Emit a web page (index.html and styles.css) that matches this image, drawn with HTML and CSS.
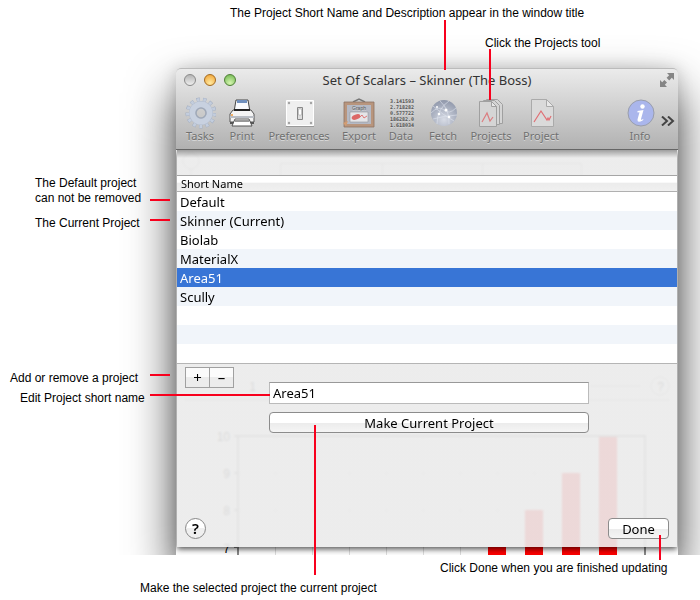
FILE: index.html
```html
<!DOCTYPE html>
<html lang="en">
<head>
    <meta charset="UTF-8">
    <meta name="viewport" content="width=device-width, initial-scale=1.0">
    <link rel="stylesheet" href="styles.css">
    <title>Projects</title>
</head>
<body>

<main class="figure">
    <div class="shot">
        <div class="window">
            <header class="titlebar">
                <div class="title-row">
                    <button class="light light-grey" aria-label="Close"></button>
                    <button class="light light-orange" aria-label="Minimize"></button>
                    <button class="light light-green" aria-label="Zoom"></button>
                    <h1 class="title">Set Of Scalars – Skinner (The Boss)</h1>
                    <button class="fullscreen" aria-label="Full screen">
                        <svg width="14" height="14" viewBox="0 0 14 14" fill="#858585">
                            <path d="M7 0h7v7l-2.200-2.200-2.600 2.600-2.600-2.600 2.600-2.600z"/>
                            <path d="M0 7l2.200 2.200 2.200-2.200 2.600 2.600-2.200 2.200L7 14H0z"/>
                        </svg>
                    </button>
                </div>
                <nav class="toolbar">
                    <button class="tool tool-tasks">
                        <svg width="32" height="32" viewBox="0 0 32 32" fill="none">
                            <circle cx="17" cy="16" r="13" stroke="#a4afc2" stroke-width="5" stroke-dasharray="3.300 2.980"/>
                            <circle cx="17" cy="16" r="13" stroke="#c3cddd" stroke-width="4" stroke-dasharray="2.600 3.680" stroke-dashoffset="-0.350"/>
                            <circle cx="17" cy="16" r="8.500" stroke="#b2bccd" stroke-width="7"/>
                            <circle cx="17" cy="16" r="8.500" stroke="#c8d1e0" stroke-width="6"/>
                            <circle cx="17" cy="16" r="5" stroke="#a0a9b8" stroke-width="1.500"/>
                        </svg>
                        <span>Tasks</span>
                    </button>
                    <button class="tool tool-print">
                        <svg width="32" height="32" viewBox="0 0 32 32">
                            <path d="M10 3h12l2 12H8z" fill="#f8fafd" stroke="#444" stroke-width="1"/>
                            <path d="M11 3h10v3H11z" fill="#6f8fbd"/>
                            <path d="M7 13h18l3 4v8H4v-8z" fill="#f4f4f4" stroke="#555"/>
                            <path d="M8 13h16" stroke="#222" stroke-width="2"/>
                            <path d="M4 19h24v2H4z" fill="#b9bdc4"/>
                            <path d="M4 25h24v2H4z" fill="#555"/>
                            <path d="M9 22h14l3 7H6z" fill="#fff" stroke="#555"/>
                            <path d="M9 24h14" stroke="#333"/>
                            <circle cx="6" cy="18" r="1" fill="#f29a38"/>
                        </svg>
                        <span>Print</span>
                    </button>
                    <button class="tool tool-prefs">
                        <svg width="32" height="32" viewBox="0 0 32 32">
                            <path d="M3.500 3.500h27v25h-27z" fill="#efefef" stroke="#fff"/>
                            <path d="M3 29.500h28" stroke="#9a9a9a"/>
                            <g fill="#a3a3a3">
                                <circle cx="6" cy="6" r="1.200"/><circle cx="28" cy="6" r="1.200"/>
                                <circle cx="6" cy="26" r="1.200"/><circle cx="28" cy="26" r="1.200"/>
                            </g>
                            <path d="M14.500 10.500h5v12h-5z" fill="#ddd" stroke="#888"/>
                            <path d="M15.500 12h3v6h-3z" fill="#fff" stroke="#999" stroke-width=".5"/>
                        </svg>
                        <span>Preferences</span>
                    </button>
                    <button class="tool tool-export">
                        <svg width="32" height="32" viewBox="0 0 32 32" fill="none">
                            <path d="M10 5l6-3 6 3" stroke="#777" stroke-width="1.500"/>
                            <path d="M2.500 6.500h27v22h-27z" fill="#b5b9c4" stroke="#b8957d" stroke-width="3"/>
                            <path d="M1 5h30v25H1z" stroke="#8d7366" stroke-width=".8"/>
                            <text class="graph-text" x="16" y="13">Graph</text>
                            <path d="M7 15h18v10H7z" fill="#e5e5e8" stroke="#92949c" stroke-width=".6"/>
                            <ellipse cx="13" cy="20" rx="4.500" ry="2.500" transform="rotate(-20 13 20)" fill="#dc6868"/>
                            <path d="M16 21l3-3 2 3 3-2" stroke="#de7777"/>
                            <path d="M0 26l5-2-2 5z" fill="#d39d72"/>
                        </svg>
                        <span>Export</span>
                    </button>
                    <button class="tool tool-data">
                        <svg width="32" height="32" viewBox="0 0 32 32" class="digits">
                            <text x="17" y="6">3.141593</text>
                            <text x="17" y="12">2.718282</text>
                            <text x="17" y="18">0.577722</text>
                            <text x="17" y="24">186282.0</text>
                            <text x="17" y="30">1.618034</text>
                        </svg>
                        <span>Data</span>
                    </button>
                    <button class="tool tool-fetch">
                        <svg width="32" height="32" viewBox="0 0 32 32" fill="none">
                            <defs>
                                <radialGradient id="globe" cx=".5" cy=".75" r=".75">
                                    <stop offset="0" stop-color="#d8dce6"/>
                                    <stop offset="1" stop-color="#8f97aa"/>
                                </radialGradient>
                            </defs>
                            <circle cx="17" cy="16" r="13" fill="url(#globe)"/>
                            <g stroke="#dfe4ee" stroke-width=".6">
                                <path d="M4 16q8-8 13-3t12-2M6 22q10-3 24-4M13 4q10 9 9 23M22 4q-12 8-12 23M6 9q10 9 21 15"/>
                            </g>
                            <g fill="#fff">
                                <circle cx="19" cy="13" r="1.500"/><circle cx="12" cy="17" r="1.300"/>
                                <circle cx="22" cy="20" r="1.300"/><circle cx="10" cy="10" r="1"/>
                            </g>
                        </svg>
                        <span>Fetch</span>
                    </button>
                    <button class="tool tool-projects">
                        <svg width="32" height="32" viewBox="0 0 32 32" fill="#d5d5d5" stroke="#a0a0a0">
                            <path d="M11.500 2.500h11l5 5v19h-16z"/>
                            <path d="M8.500 3.500h11l5 5v19h-16z"/>
                            <path d="M4.500 4.500h12l5 5v20h-17z"/>
                            <path d="M16.500 4.500v5h5z" fill="#e8e8e8"/>
                            <path d="M7 25l5-9 3 8 3-4" fill="none" stroke="#dc7d80" stroke-width="1.200"/>
                        </svg>
                        <span>Projects</span>
                    </button>
                    <button class="tool tool-project">
                        <svg width="32" height="32" viewBox="0 0 32 32" fill="#dadada" stroke="#aaa">
                            <path d="M6.500 2.500h15l7 7v20h-22z"/>
                            <path d="M21.500 2.500v7h7z" fill="#e8e8e8"/>
                            <path d="M9 25l7-11 6 9 1-2 1 2 2-4" fill="none" stroke="#e06f74" stroke-width="1.200"/>
                        </svg>
                        <span>Project</span>
                    </button>
                    <button class="tool tool-info">
                        <svg width="32" height="32" viewBox="0 0 32 32">
                            <circle cx="17" cy="16" r="13" fill="#aab6ec" stroke="#9a9eac"/>
                            <circle cx="18.500" cy="9.500" r="2.200" fill="#fff"/>
                            <path d="M13.500 14l6-1-2.500 9q-.3 1.800 2.500-.2l-.5 1.500q-6 3.500-5.500-.8l2-7.300-2 .2z" fill="#fff"/>
                        </svg>
                        <span>Info</span>
                    </button>
                    <button class="more" aria-label="More tools">
                        <svg width="14" height="10" viewBox="0 0 14 10" fill="none" stroke="#444" stroke-width="2">
                            <path d="M1 0.500l5 4.500-5 4.500M7 0.500l5 4.500-5 4.500"/>
                        </svg>
                    </button>
                </nav>
            </header>

            <div class="document">
                <!-- document behind the sheet -->
                <svg class="backdrop" width="502" height="405" viewBox="0 0 502 405" fill="none" stroke="#999">
                    <circle cx="15" cy="11" r="8"/>
                    <path d="M15 19v8M104.500 40V13.500h301V40M206.500 14v26M306.500 14v26"/>
                    <circle cx="484" cy="236" r="9"/>
                    <path d="M414 236h51M8 250h486"/>
                    <g stroke="#ddd">
                        <path d="M99.500 287v120M136.500 287v120M173.500 287v120M210.500 287v120M247.500 287v120M284.500 287v120M321.500 287v120M358.500 287v120M395.500 287v120M432.500 287v120"/>
                        <path d="M62 323.500h407M62 360.500h407"/>
                    </g>
                    <g fill="#f00" stroke="none">
                        <path d="M423 286h18v120h-18zM386 323h18v83h-18zM349 360h18v46h-18zM312 397h18v9h-18z"/>
                    </g>
                    <path d="M62 406V286h407v120M58 286h4M58 323h4M58 360h4M58 397h4" stroke="#888" stroke-width="2"/>
                    <g class="axis-text">
                        <text x="54" y="291">10</text>
                        <text x="54" y="328">9</text>
                        <text x="54" y="365">8</text>
                        <text x="54" y="403">7</text>
                        <text x="172" y="38">Labels</text>
                        <text x="260" y="38">1</text>
                        <text x="360" y="38">2</text>
                        <text x="80" y="241">1</text>
                        <text x="488" y="241">?</text>
                    </g>
                </svg>

                <form class="sheet">
                    <table class="projects">
                        <thead>
                            <tr><th scope="col">Short Name</th></tr>
                        </thead>
                        <tbody>
                            <tr><td>Default</td></tr>
                            <tr><td>Skinner (Current)</td></tr>
                            <tr><td>Biolab</td></tr>
                            <tr><td>MaterialX</td></tr>
                            <tr class="selected"><td>Area51</td></tr>
                            <tr><td>Scully</td></tr>
                            <tr><td></td></tr>
                            <tr><td></td></tr>
                            <tr><td></td></tr>
                        </tbody>
                    </table>
                    <div class="editor">
                        <div class="add-remove">
                            <button type="button" aria-label="Add project">+</button>
                            <button type="button" aria-label="Remove project">–</button>
                        </div>
                        <div class="fields">
                            <input type="text" class="short-name" value="Area51" aria-label="Short name">
                            <button type="button" class="push">Make Current Project</button>
                        </div>
                    </div>
                    <div class="actions">
                        <button type="button" class="help" aria-label="Help">?</button>
                        <button type="button" class="push done">Done</button>
                    </div>
                </form>
            </div>
        </div>
    </div>

    <!-- callouts -->
    <p class="note note-title">The Project Short Name and Description appear in the window title</p>
    <p class="note note-tool">Click the Projects tool</p>
    <p class="note note-default">The Default project<br>can not be removed</p>
    <p class="note note-current">The Current Project</p>
    <p class="note note-add">Add or remove a project</p>
    <p class="note note-edit">Edit Project short name</p>
    <p class="note note-make">Make the selected project the current project</p>
    <p class="note note-done">Click Done when you are finished updating</p>
    <svg class="pointers" width="700" height="600" viewBox="0 0 700 600" stroke="#f8001d" stroke-width="2">
        <path d="M445 20v50M490 49v51M150 200h20M150 220h20M150 375h20M150 395h120M315 425v150M660 535v25"/>
    </svg>
</main>

</body>
</html>
```

FILE: styles.css
```css
body {
    margin: 0;
    background-color: #fff;
    font-family: "Noto Sans", "Open Sans", sans-serif;
    font-size: 13px;
    color: #000;
}

button {
    margin: 0;
    padding: 0;
    border: none;
    background: none;
    font-family: inherit;
    color: inherit;
}

.figure {
    position: relative;
    padding-bottom: 45px;
}

.shot {
    padding: 68px 22px 0 176px;
    overflow: hidden;
}

.window {
    border-radius: 5px 5px 0 0;
    box-shadow: 0 24px 48px rgba(0, 0, 0, 0.75), 0 0 16px rgba(0, 0, 0, 0.15);
}

/* title bar and toolbar */
.titlebar {
    height: 82px;
    border-top: 1px solid #bbb;
    border-bottom: 1px solid #666;
    border-radius: 5px 5px 0 0;
    box-sizing: border-box;
    background: linear-gradient(#ebebeb, #b1b1b1);
}

.title-row {
    display: flex;
    align-items: center;
    gap: 8px;
    height: 22px;
    padding: 0 4px 0 8px;
}

.light {
    width: 12px;
    height: 12px;
    border: 1px solid #8a8a8a;
    border-radius: 50%;
}

.light-grey {
    background: linear-gradient(#b5b5b5, #eee);
}

.light-orange {
    border-color: #a36a20;
    background: radial-gradient(circle at 50% 80%, #ffe9a0, #f0a030);
}

.light-green {
    border-color: #4f7f36;
    background: radial-gradient(circle at 50% 80%, #d5f5b0, #6cb54c);
}

.title {
    flex: 1;
    margin: 0;
    font-size: 13px;
    font-weight: normal;
    text-align: center;
    color: #333;
    padding-right: 42px;
}

.fullscreen {
    width: 14px;
    height: 14px;
}

.fullscreen svg,
.more svg {
    display: block;
}

.toolbar {
    display: flex;
    align-items: center;
    padding: 6px 2px 0;
}

.tool {
    display: flex;
    flex-direction: column;
    align-items: center;
    font-size: 12px;
    line-height: 16px;
    color: #707070;
    text-shadow: 0 1px 0 #d8d8d8;
}

.tool span {
    margin-top: -1px;
    font-size: 11px;
}

.tool-tasks { width: 44px; }
.tool-print { width: 40px; }
.tool-prefs { width: 74px; }
.tool-export { width: 46px; }
.tool-data { width: 38px; }
.tool-fetch { width: 46px; }
.tool-projects { width: 50px; }
.tool-project { width: 50px; }

.tool-info {
    width: 32px;
    margin-left: auto;
}

.more {
    width: 20px;
    padding-left: 5px;
}

.digits {
    font: bold 5px "DejaVu Sans Mono", monospace;
    fill: #555;
    text-anchor: middle;
}

.graph-text {
    font: 5px "Liberation Sans", sans-serif;
    fill: #555;
    text-anchor: middle;
}

/* sheet */
.document {
    position: relative;
    padding: 0 1px 8px;
    background-color: #fff;
    overflow: hidden;
}

.backdrop {
    position: absolute;
    top: 0;
    left: 0;
}

.axis-text {
    font: 12px "Liberation Sans", sans-serif;
    fill: #000;
    stroke: none;
    text-anchor: end;
}

.sheet {
    position: relative;
    padding-top: 25px;
    background: linear-gradient(rgba(150, 150, 150, 0.92), rgba(235, 235, 235, 0.92) 8px);
    backdrop-filter: blur(1px);
    box-shadow: 0 2px 6px rgba(0, 0, 0, 0.7);
}

.projects {
    width: 100%;
    border-collapse: separate;
    border-spacing: 0;
    border-bottom: 1px solid #b5b5b5;
    background-color: #fff;
}

.projects th {
    height: 15px;
    padding: 0 4px;
    border-top: 1px solid #a5a5a5;
    border-bottom: 1px solid #b0b0b0;
    background: linear-gradient(#fff 40%, #ececec 50%, #f0f0f0);
    font-size: 11px;
    font-weight: normal;
    line-height: 15px;
    text-align: left;
}

.projects td {
    height: 17px;
    padding: 2px 3px 0;
    line-height: 17px;
}

.projects tbody tr:nth-child(even) {
    background-color: #f1f5fa;
}

.projects tbody .selected {
    background-color: #3875d6;
    color: #fff;
}

.editor {
    display: grid;
    grid-template-columns: 84px 1fr 80px;
    align-items: start;
    padding: 3px 8px 0;
}

.add-remove {
    display: flex;
}

.add-remove button {
    width: 25px;
    height: 21px;
    border: 1px solid #a0a0a0;
    background: linear-gradient(#fbfbfb 50%, #ececec 50%);
    font-size: 15px;
    line-height: 19px;
}

.add-remove button + button {
    border-left: none;
    width: 24px;
}

.fields {
    display: flex;
    flex-direction: column;
    gap: 8px;
    padding-top: 15px;
}

.short-name {
    height: 22px;
    padding: 0 3px;
    border: 1px solid #bbb;
    border-top-color: #999;
    box-sizing: border-box;
    background-color: #fff;
    font-family: inherit;
    font-size: 13px;
}

.push {
    height: 21px;
    border: 1px solid #8c8c8c;
    border-radius: 4px;
    background: linear-gradient(#fff 50%, #ececec 55%, #f5f5f5);
    font-size: 13px;
    line-height: 18px;
}

.actions {
    display: flex;
    justify-content: space-between;
    padding: 85px 8px 8px;
}

.help {
    width: 21px;
    height: 21px;
    border: 1px solid #888;
    border-radius: 50%;
    background: linear-gradient(#fff 50%, #efefef 50%);
    font-size: 15px;
    font-weight: 600;
    line-height: 19px;
}

.done {
    width: 61px;
}

/* callouts */
.note {
    position: absolute;
    margin: 0;
    font: 12px/15px "Liberation Sans", Arial, sans-serif;
    white-space: nowrap;
}

.note-title {
    top: 6px;
    left: 230px;
}

.note-tool {
    top: 36px;
    left: 485px;
}

.note-default {
    top: 176px;
    left: 35px;
}

.note-current {
    top: 216px;
    left: 35px;
}

.note-add {
    top: 371px;
    left: 10px;
}

.note-edit {
    top: 391px;
    left: 20px;
}

.note-make {
    top: 581px;
    left: 140px;
}

.note-done {
    top: 561px;
    left: 440px;
}

.pointers {
    position: absolute;
    top: 0;
    left: 0;
    pointer-events: none;
}
```
